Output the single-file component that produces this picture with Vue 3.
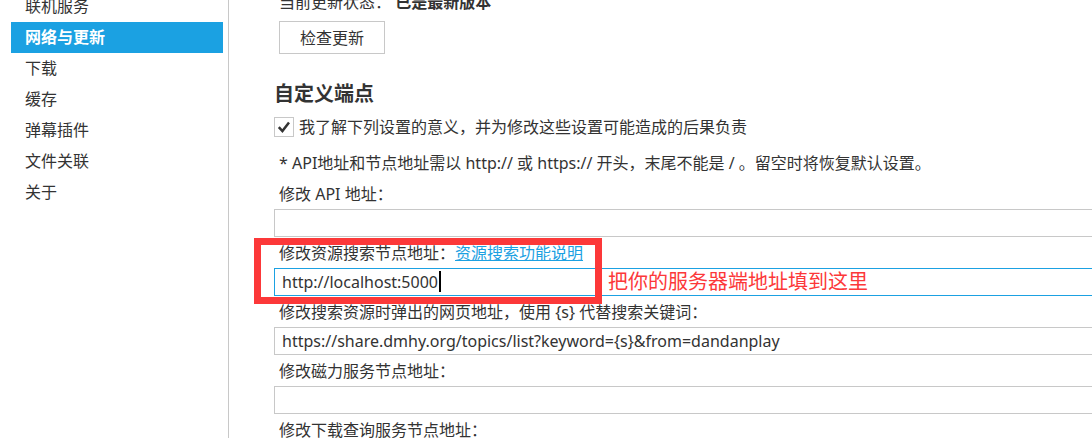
<script setup>
import { ref } from 'vue'

const sections = ['联机服务', '网络与更新', '下载', '缓存', '弹幕插件', '文件关联', '关于']
const active = '网络与更新'
const accepted = ref(true)
const fields = ref([
  { id: 'api', label: '修改 API 地址：', value: '' },
  { id: 'resource', label: '修改资源搜索节点地址：', value: 'http://localhost:5000', help: '资源搜索功能说明', note: '把你的服务器端地址填到这里' },
  { id: 'web', label: '修改搜索资源时弹出的网页地址，使用 {s} 代替搜索关键词：', value: 'https://share.dmhy.org/topics/list?keyword={s}&from=dandanplay' },
  { id: 'magnet', label: '修改磁力服务节点地址：', value: '' }
])
</script>

<template>
  <div class="page">
    <nav class="sidebar">
      <a v-for="s in sections" :key="s" href="#" class="item" :class="{ active: s === active }">{{ s }}</a>
    </nav>
    <main class="content">
      <p class="status">当前更新状态： <strong>已是最新版本</strong></p>
      <button class="check-update" type="button">检查更新</button>
      <h2>自定义端点</h2>
      <label class="agree">
        <span class="box">
          <input v-model="accepted" type="checkbox">
          <svg v-if="accepted" viewBox="0 0 20 20" aria-hidden="true"><path d="M4.8 10.2 8.4 14 15 5.6" /></svg>
        </span>
        <span>我了解下列设置的意义，并为修改这些设置可能造成的后果负责</span>
      </label>
      <p class="hint">* API地址和节点地址需以 http:// 或 https:// 开头，末尾不能是 / 。留空时将恢复默认设置。</p>
      <div v-for="f in fields" :key="f.id" class="field" :class="{ focused: f.note }">
        <div class="caption">
          <label :for="f.id">{{ f.label }}</label>
          <a v-if="f.help" href="#">{{ f.help }}</a>
        </div>
        <input :id="f.id" v-model="f.value" type="text" spellcheck="false">
        <template v-if="f.note">
          <span class="caret"></span>
          <span class="frame"></span>
          <span class="note">{{ f.note }}</span>
        </template>
      </div>
      <p class="caption">修改下载查询服务节点地址：</p>
    </main>
  </div>
</template>

<style>
body {
  margin: 0;
  background: #fff;
}
</style>

<style scoped>
.page {
  display: flex;
  height: 100vh;
  overflow: hidden;
  color: #333;
  font-family: "Noto Sans", "Noto Sans CJK SC", sans-serif;
  font-size: 16px;
  line-height: 24px;
}
.sidebar {
  box-sizing: border-box;
  flex: 0 0 229px;
  padding: 0 5px 0 11px;
  border-right: 1px solid #c8c8c8;
}
.item {
  display: block;
  padding-left: 14px;
  line-height: 31px;
  color: #333;
  text-decoration: none;
}
.item:first-child {
  margin-top: -9px;
}
.item.active {
  background: #1ba1e2;
  color: #fff;
  font-weight: 700;
}
.content {
  flex: 1;
  min-width: 0;
  padding-left: 45px;
}
p {
  margin: 0;
}
.status {
  margin-top: -10px;
  padding-left: 5px;
}
.check-update {
  display: block;
  box-sizing: border-box;
  height: 33px;
  margin: 7px 0 0 5px;
  padding: 0 20px;
  border: 1px solid #c8c8c8;
  background: #fff;
  color: #333;
  font: inherit;
}
h2 {
  margin: 26px 0 9px;
  font-size: 20px;
  line-height: 28px;
}
.agree {
  display: flex;
  align-items: center;
  gap: 5px;
  height: 20px;
}
.box {
  position: relative;
  width: 20px;
  height: 20px;
}
.box input {
  appearance: none;
  display: block;
  box-sizing: border-box;
  width: 20px;
  height: 20px;
  margin: 0;
  border: 1px solid #c8c8c8;
  background: #fff;
}
.box svg {
  position: absolute;
  inset: 0;
  fill: none;
  stroke: #333;
  stroke-width: 2.5;
  pointer-events: none;
}
.hint {
  margin: 14px 0 3px;
  padding-left: 5px;
}
.caption {
  display: flex;
  padding: 2px 0 0 5px;
  line-height: 29px;
  white-space: nowrap;
}
.caption a {
  color: #1ba1e2;
}
.field {
  position: relative;
}
.field input {
  display: block;
  box-sizing: border-box;
  width: 100%;
  height: 28px;
  padding: 0 7px;
  border: 1px solid #c8c8c8;
  border-right: 0;
  border-radius: 0;
  outline: 0;
  background: #fff;
  color: #333;
  font: inherit;
}
.field.focused input {
  border-color: #1ba1e2;
}
.caret {
  position: absolute;
  left: 165px;
  bottom: 4px;
  width: 2px;
  height: 21px;
  background: #000;
}
.frame {
  position: absolute;
  left: -20px;
  top: 1px;
  box-sizing: border-box;
  width: 348px;
  height: 66px;
  border: 7px solid #fc3839;
  pointer-events: none;
}
.note {
  position: absolute;
  left: 334px;
  bottom: 0;
  color: #fc3839;
  font-size: 20px;
  line-height: 28px;
  white-space: nowrap;
  pointer-events: none;
}
</style>
